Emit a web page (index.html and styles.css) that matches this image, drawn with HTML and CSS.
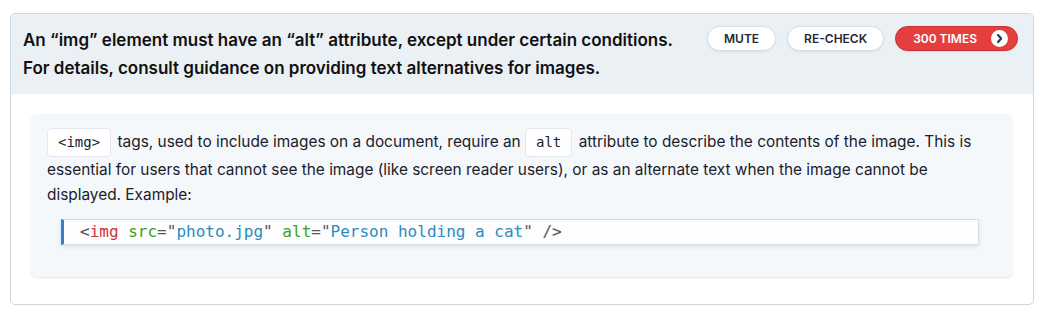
FILE: index.html
```html
<!DOCTYPE html>
<html lang="en">
<head>
<meta charset="utf-8">
<title>Rule</title>
<link rel="stylesheet" href="styles.css">
</head>
<body>
<section class="card">
  <header class="card-head">
    <h2 class="title">An “img” element must have an “alt” attribute, except under certain conditions. For details, consult guidance on providing text alternatives for images.</h2>
    <div class="actions">
      <button class="btn">MUTE</button>
      <button class="btn">RE-CHECK</button>
      <button class="btn btn-red">300 TIMES
        <span class="chev"><svg width="17" height="17" viewBox="0 0 16 16"><circle cx="8" cy="8" r="8" fill="#fff"/><path d="M6.6 4.8 L9.6 8 L6.6 11.2" fill="none" stroke="#2d3748" stroke-width="2" stroke-linecap="round" stroke-linejoin="round"/></svg></span>
      </button>
    </div>
  </header>
  <div class="card-body">
    <div class="help">
      <p class="desc"><code class="chip">&lt;img&gt;</code> tags, used to include images on a document, require an <code class="chip">alt</code> attribute to describe the contents of the image. This is essential for users that cannot see the image (like screen reader users), or as an alternate text when the image cannot be displayed. Example:</p>
      <pre class="example"><span class="p">&lt;</span><span class="t">img</span> <span class="a">src</span><span class="p">=</span><span class="p">"</span><span class="s">photo.jpg</span><span class="p">"</span> <span class="a">alt</span><span class="p">=</span><span class="p">"</span><span class="s">Person holding a cat</span><span class="p">"</span> <span class="p">/&gt;</span></pre>
    </div>
  </div>
</section>
</body>
</html>
```

FILE: styles.css
```css
* { box-sizing: border-box; }
body {
  margin: 0;
  padding: 13px 14px 0 10px;
  background: #fff;
  font-family: Inter, "Noto Sans", sans-serif;
  color: #1a202c;
}
.card {
  border: 1px solid #cfd6de;
  border-radius: 5px;
  overflow: hidden;
}
.card-head {
  background: #ebf0f5;
  display: flex;
  align-items: flex-start;
  justify-content: space-between;
  padding: 12px 15px 10px 12px;
  height: 80px;
}
.title {
  margin: 0;
  flex: 0 1 672px;
  font-size: 17px;
  font-weight: 600;
  line-height: 28px;
  color: #111;
}
.actions {
  flex: none;
  display: flex;
  gap: 11px;
}
.btn {
  font-family: Inter, sans-serif;
  font-size: 12px;
  font-weight: 600;
  white-space: nowrap;
  height: 25px;
  border-radius: 13px;
  border: 1px solid #d7dde4;
  background: #fff;
  color: #1f2937;
  padding: 0 16px;
  box-shadow: 0 1px 2px rgba(0,0,0,0.08);
  display: flex;
  align-items: center;
  gap: 14px;
}
.btn-red {
  background: #e53e3e;
  border-color: #c53030;
  color: #fff;
  padding: 0 9px 0 17px;
}
.chev { display: flex; }
.card-body {
  padding: 20px 20px 27px 20px;
}
.help {
  background: #f5f8fb;
  border-radius: 6px;
  box-shadow: 0 1px 2px rgba(0,0,0,0.1);
  padding: 14px 16px 32px 16px;
}
.desc {
  margin: 0;
  font-size: 15.4px;
  line-height: 25px;
  color: #1a202c;
}
.chip {
  display: inline-block;
  vertical-align: middle;
  font-family: "DejaVu Sans Mono", monospace;
  font-size: 14px;
  line-height: 21px;
  background: #fff;
  border: 1px solid #e4e8ee;
  border-radius: 4px;
  padding: 3px 10px;
  margin: 0 2px 0 0;
}
.example {
  margin: 12px 18px 0 14px;
  background: #fdfdfd;
  border: 1px solid #dcdcdc;
  border-left: 3px solid #3182ce;
  box-shadow: 0 2px 4px rgba(0,0,0,0.1);
  font-family: "DejaVu Sans Mono", monospace;
  font-size: 16px;
  line-height: 22px;
  padding: 1px 16px;
  color: #555;
}
.p { color: #555; }
.t { color: #d0343c; }
.a { color: #41a01a; }
.s { color: #2a8cbf; }
```
